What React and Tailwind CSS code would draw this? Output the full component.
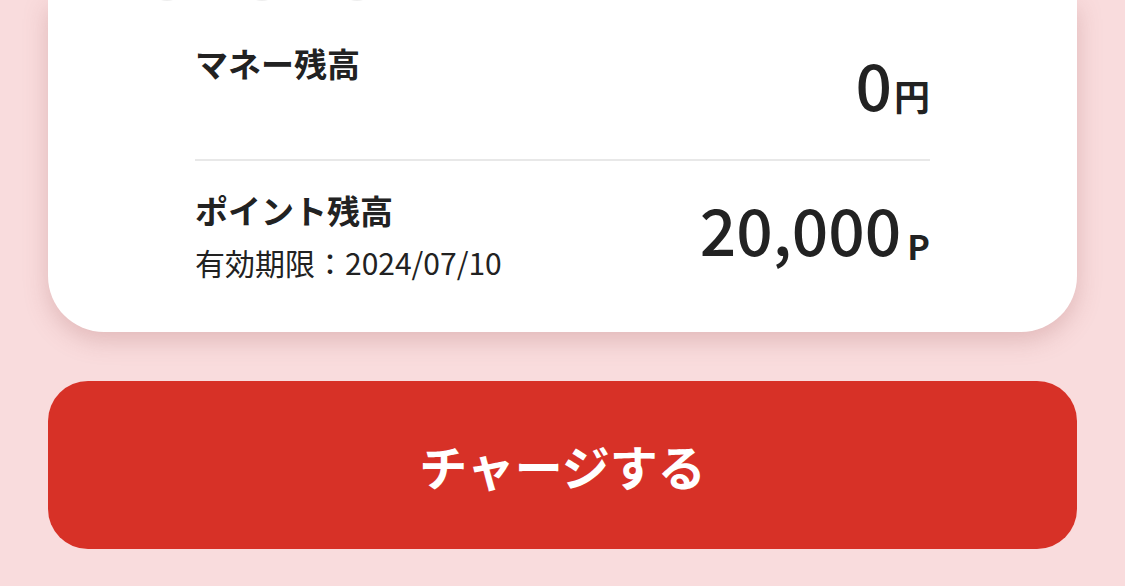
import React from "react";

const font = { fontFamily: '"Noto Sans CJK JP", "Noto Sans", sans-serif' };

const App = () => {
  return (
    <div
      className="h-[586px] w-full overflow-hidden bg-[#f9dcdd] px-[48px] text-[#222222]"
      style={font}
    >
      {/* CARD */}
      <div className="rounded-b-[56px] bg-white shadow-[0_8px_24px_rgba(160,90,90,0.28)]">
        {/* icons cut off at top */}
        <div className="flex gap-[59px] pl-[101px] h-[6px] overflow-hidden">
          <span className="block w-[36px] h-[36px] -mt-[35px] rounded-full border-2 border-[#eeeeee]"></span>
          <span className="block w-[36px] h-[36px] -mt-[35px] rounded-full border-2 border-[#eeeeee]"></span>
          <span className="block w-[36px] h-[36px] -mt-[35px] rounded-full border-2 border-[#eeeeee]"></span>
        </div>

        <div className="px-[147px] pt-[34px] pb-[49px]">
          {/* MONEY */}
          <div className="flex justify-between items-start pb-[30px] border-b-2 border-[#e8e8e8]">
            <p className="text-[33px] font-bold leading-[1.4]">マネー残高</p>
            <p className="flex items-baseline -mt-[1px] leading-none">
              <span className="text-[64px] font-medium leading-[1.4]">0</span>
              <span className="text-[36px] font-bold ml-[2px]">円</span>
            </p>
          </div>

          {/* POINT */}
          <div className="flex justify-between items-start pt-[26px]">
            <div>
              <p className="text-[33px] font-bold leading-[1.4]">ポイント残高</p>
              <p className="text-[30px] leading-[1.4] mt-[8px]">有効期限：2024/07/10</p>
            </div>
            <p className="flex items-baseline -mt-[3px] leading-none">
              <span className="text-[64px] font-medium leading-[1.4]">20,000</span>
              <span className="text-[34px] font-bold ml-[6px] translate-y-[4px]">P</span>
            </p>
          </div>
        </div>
      </div>

      {/* BUTTON */}
      <button className="mt-[49px] w-full h-[168px] rounded-[40px] bg-[#d73127] text-white text-[48px] font-bold">
        チャージする
      </button>
    </div>
  );
};

export default App;
